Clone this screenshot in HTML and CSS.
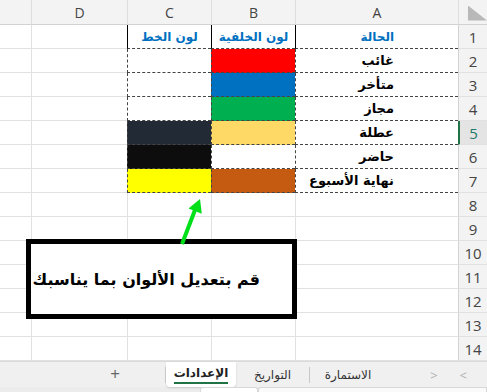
FILE: index.html
```html
<!DOCTYPE html>
<html lang="ar">
<head>
    <meta charset="UTF-8">
    <title>الإعدادات</title>
    <link rel="stylesheet" href="styles.css">
</head>
<body>
    <div class="sheet">
        <table class="grid" dir="rtl">
            <colgroup>
                <col class="c-head"><col class="c-a"><col class="c-b"><col class="c-c"><col class="c-d"><col class="c-e">
            </colgroup>
            <thead>
                <tr>
                    <th class="corner"><span class="tri"></span></th>
                    <th>A</th>
                    <th>B</th>
                    <th>C</th>
                    <th>D</th>
                    <th class="last"></th>
                </tr>
            </thead>
            <tbody>
                <tr>
                    <th>1</th>
                    <td class="bx top name title">الحالة</td>
                    <td class="bx top title">لون الخلفية</td>
                    <td class="bx top title">لون الخط</td>
                    <td></td><td class="last"></td>
                </tr>
                <tr>
                    <th>2</th>
                    <td class="bx name">غائب</td>
                    <td class="bx red"></td>
                    <td class="bx"></td>
                    <td></td><td class="last"></td>
                </tr>
                <tr>
                    <th>3</th>
                    <td class="bx name">متأخر</td>
                    <td class="bx blue"></td>
                    <td class="bx"></td>
                    <td></td><td class="last"></td>
                </tr>
                <tr>
                    <th>4</th>
                    <td class="bx name">مجاز</td>
                    <td class="bx green"></td>
                    <td class="bx"></td>
                    <td></td><td class="last"></td>
                </tr>
                <tr>
                    <th class="sel">5</th>
                    <td class="bx name">عطلة</td>
                    <td class="bx gold"></td>
                    <td class="bx navy"></td>
                    <td></td><td class="last"></td>
                </tr>
                <tr>
                    <th>6</th>
                    <td class="bx name">حاضر</td>
                    <td class="bx"></td>
                    <td class="bx black"></td>
                    <td></td><td class="last"></td>
                </tr>
                <tr>
                    <th>7</th>
                    <td class="bx name">نهاية الأسبوع</td>
                    <td class="bx orange"></td>
                    <td class="bx yellow"></td>
                    <td></td><td class="last"></td>
                </tr>
                <tr><th>8</th><td></td><td></td><td></td><td></td><td class="last"></td></tr>
                <tr><th>9</th><td></td><td></td><td></td><td></td><td class="last"></td></tr>
                <tr><th>10</th><td></td><td></td><td></td><td></td><td class="last"></td></tr>
                <tr><th>11</th><td></td><td></td><td></td><td></td><td class="last"></td></tr>
                <tr><th>12</th><td></td><td></td><td></td><td></td><td class="last"></td></tr>
                <tr><th>13</th><td></td><td></td><td></td><td></td><td class="last"></td></tr>
                <tr><th>14</th><td></td><td></td><td></td><td></td><td class="last"></td></tr>
            </tbody>
        </table>

        <!-- شريط الأوراق -->
        <div class="tabs" dir="rtl">
            <div class="nav"><span>&gt;</span><span>&lt;</span></div>
            <div class="tab t1">الاستمارة</div>
            <span class="sep"></span>
            <div class="tab t2">التواريخ</div>
            <div class="tab active"><span>الإعدادات</span></div>
            <span class="sep"></span>
            <div class="plus">+</div>
        </div>
        <div class="scroll">
            <div class="sc-a"></div>
            <div class="sc-b"></div>
        </div>

        <!-- مربع النص والسهم -->
        <div class="note" dir="rtl">قم بتعديل الألوان بما يناسبك</div>
        <svg class="arrow" width="487" height="392" viewBox="0 0 487 392">
            <line x1="182" y1="244" x2="195" y2="210" stroke="#00e01a" stroke-width="4"/>
            <polygon points="200,199 188.5,208.5 201.8,213.7" fill="#00e01a"/>
        </svg>
    </div>
</body>
</html>
```

FILE: styles.css
```css
*{
    margin: 0;
    padding: 0;
    box-sizing: border-box;
}

body{
    width: 487px;
    height: 392px;
    overflow: hidden;
    background: #fff;
    font-family: "DejaVu Sans", sans-serif;
}

.sheet{
    position: relative;
    width: 487px;
    height: 392px;
}

.grid{
    width: 487px;
    table-layout: fixed;
    border-collapse: separate;
    border-spacing: 0;
}

.c-head{ width: 29px; }
.c-a{ width: 163px; }
.c-b{ width: 84px; }
.c-c{ width: 84px; }
.c-d{ width: 96px; }
.c-e{ width: 31px; }

.grid th,
.grid td{
    height: 24px;
    padding: 0;
    border-bottom: 1px solid #e1e1e1;
    border-left: 1px solid #e1e1e1;
    overflow: hidden;
    white-space: nowrap;
}

.grid .last{
    border-left: none;
}

/* رؤوس الأعمدة */
.grid thead th{
    height: 25px;
    background: #f3f3f3;
    border-bottom: 1px solid #d2d2d2;
    border-left: 1px solid #dedede;
    font-family: "Open Sans", sans-serif;
    font-weight: normal;
    font-size: 14px;
    color: #444;
}

.grid thead th.last{
    border-left: none;
}

.corner .tri{
    display: block;
    width: 19px;
    height: 15px;
    margin: 2px 0 0 3px;
    background: #b8b8b8;
    clip-path: polygon(0 0, 0 100%, 100% 100%);
}

/* أرقام الصفوف */
.grid tbody th{
    background: #f3f3f3;
    border-left: 1px solid #d2d2d2;
    border-bottom: 1px solid #e1e1e1;
    font-family: "Open Sans", sans-serif;
    font-weight: normal;
    font-size: 15px;
    color: #444;
    text-align: center;
}

.grid tbody th.sel{
    background: #e4e4e4;
    color: #1f7a6b;
    border-left: 2px solid #217346;
}

/* خلايا الجدول */
.grid td.bx{
    border-bottom: 1px dashed #444;
    border-left: 1px dashed #444;
    text-align: center;
    font-weight: bold;
    font-size: 13px;
    color: #000;
}

.grid td.top{
    border-left-style: solid;
    border-left-color: #000;
}

.grid td.name{
    text-align: right;
    padding-right: 64px;
}

.grid td.title{
    color: #0070c0;
    font-size: 12px;
}

.red{ background: #ff0000; }
.blue{ background: #0070c0; }
.green{ background: #00b050; }
.gold{ background: #ffd966; }
.navy{ background: #222a35; }
.black{ background: #0d0d0d; }
.orange{ background: #c55a11; }
.yellow{ background: #ffff00; }

/* شريط الأوراق */
.tabs{
    display: flex;
    align-items: stretch;
    height: 26px;
    background: #f0f0f0;
    border-top: 1px solid #dadada;
    font-size: 12px;
    color: #333;
}

.nav{
    display: flex;
    width: 101px;
    padding-right: 20px;
    gap: 22px;
    align-items: center;
    color: #b0b0b0;
    font-family: "Open Sans", sans-serif;
    font-size: 13px;
}

.tab{
    display: flex;
    align-items: center;
    justify-content: center;
}

.t1{ width: 76px; }
.t2{ width: 73px; }

.sep{
    width: 1px;
    height: 16px;
    margin-top: 5px;
    background: #c8c8c8;
}

.tab.active{
    width: 70px;
    background: #fff;
    border-radius: 0 0 4px 4px;
    box-shadow: 0 1px 2px rgba(0, 0, 0, 0.15);
    font-weight: bold;
    color: #222;
}

.tab.active span{
    padding-bottom: 2px;
    border-bottom: 2px solid #217346;
}

.plus{
    width: 100px;
    text-align: center;
    line-height: 24px;
    font-family: "Open Sans", sans-serif;
    font-size: 17px;
    color: #666;
}

.scroll{
    display: flex;
    height: 5px;
    background: #ececec;
    padding-left: 200px;
}

.sc-a{
    width: 58px;
    background: #fff;
    border: 1px solid #d8d8d8;
    border-bottom: none;
    border-radius: 3px 3px 0 0;
}

.sc-b{
    flex: 1;
    background: #fafafa;
    border: 1px solid #d8d8d8;
    border-bottom: none;
    border-radius: 3px 0 0 0;
}

/* مربع النص */
.note{
    position: absolute;
    left: 26px;
    top: 239px;
    width: 271px;
    height: 80px;
    border: 5px solid #000;
    background: #fff;
    display: flex;
    align-items: center;
    padding-right: 32px;
    font-weight: bold;
    font-size: 16px;
    color: #000;
}

.arrow{
    position: absolute;
    left: 0;
    top: 0;
    pointer-events: none;
}
```
